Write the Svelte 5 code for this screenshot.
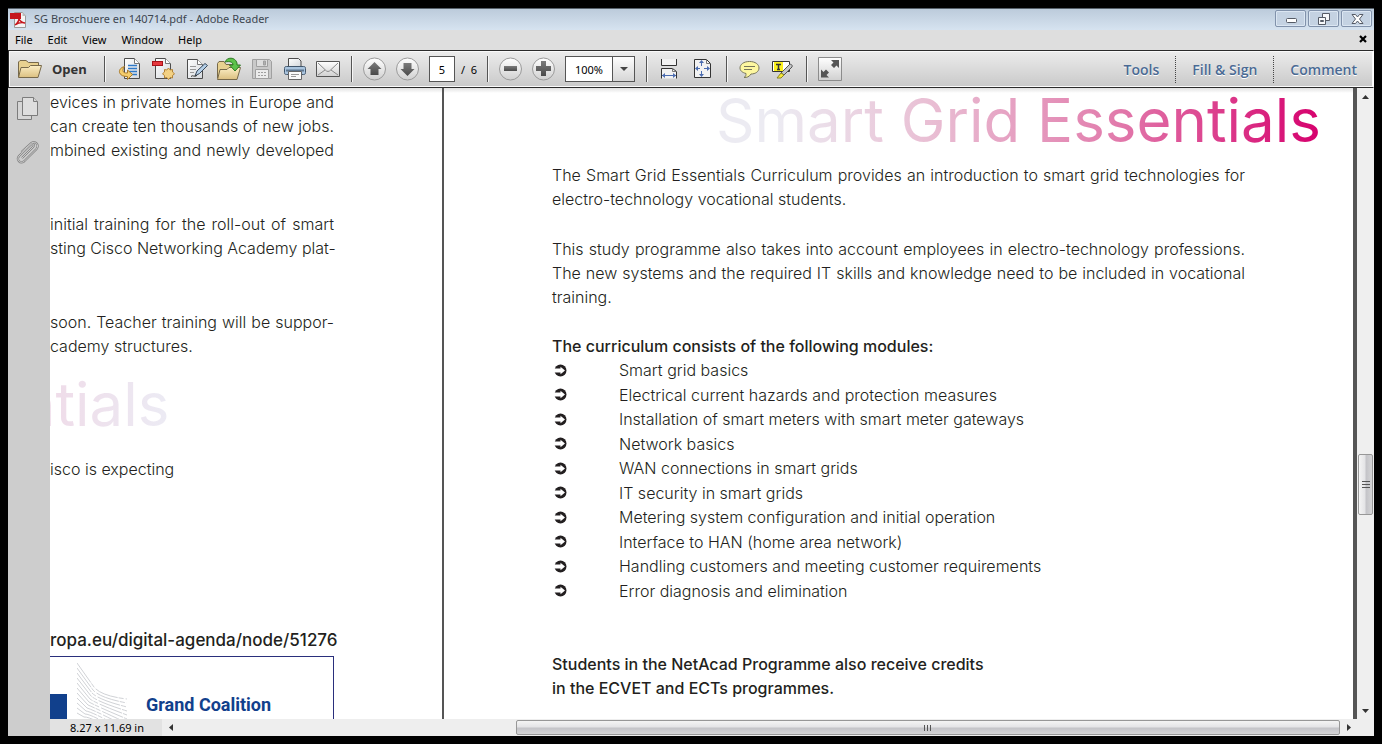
<script>
  const menus = ["File", "Edit", "View", "Window", "Help"];
  const panels = ["Tools", "Fill & Sign", "Comment"];
  const modules = [
    "Smart grid basics",
    "Electrical current hazards and protection measures",
    "Installation of smart meters with smart meter gateways",
    "Network basics",
    "WAN connections in smart grids",
    "IT security in smart grids",
    "Metering system configuration and initial operation",
    "Interface to HAN (home area network)",
    "Handling customers and meeting customer requirements",
    "Error diagnosis and elimination",
  ];
  const waves = [0, 1, 2, 3, 4, 5, 6, 7, 8, 9, 10];

  let page = $state("5");
  let zoom = $state("100%");
</script>

<div class="window">
  <header class="titlebar">
    <svg class="app-icon" width="18" height="18" viewBox="0 0 18 18">
      <path d="M4.500 1.500h8l3 3v12h-11z" fill="#f4f4f4" stroke="#9a9a9a" />
      <path d="M12.500 1v4h4z" fill="#bbb" />
      <rect x="0" y="2" width="11" height="6" fill="#c5161d" />
      <path
        d="M5 14c3-2 5-6 4-9c-1 4 3 7 6 7c-3-1-7 0-10 2z"
        fill="none"
        stroke="#c5161d"
        stroke-width="1.500"
      />
    </svg>
    <span class="title">SG Broschuere en 140714.pdf - Adobe Reader</span>
    <div class="window-buttons">
      <button aria-label="Minimize">
        <svg width="20" height="14" viewBox="0 0 20 14">
          <rect x="5.500" y="6.500" width="10" height="4" rx="1" fill="#fff" stroke="#555b66" />
        </svg>
      </button>
      <button aria-label="Restore">
        <svg width="20" height="14" viewBox="0 0 20 14" fill="#f6f8fa" stroke="#555b66">
          <path d="M8.500 1.500h7v7h-7z" />
          <path d="M4.500 5.500h7v7h-7z" />
          <path d="M6.500 8.500h3v1h-3z" />
        </svg>
      </button>
      <button aria-label="Close">
        <svg width="20" height="14" viewBox="0 0 20 14">
          <path
            d="M5 2.500h3.500l2 2.500l2-2.500H16L12.500 7L16 11.500h-3.500l-2-2.500l-2 2.500H5L8.500 7z"
            fill="#fff"
            stroke="#555b66"
          />
        </svg>
      </button>
    </div>
  </header>

  <nav class="menubar">
    {#each menus as m}
      <button>{m}</button>
    {/each}
    <button class="close-doc" aria-label="Close document">
      <svg width="8" height="8" viewBox="0 0 8 8">
        <path d="M1 1l6 6M7 1l-6 6" stroke="#000" stroke-width="2.200" />
      </svg>
    </button>
  </nav>

  <div class="toolbar">
    <svg class="defs" width="0" height="0" aria-hidden="true">
      <defs>
        <linearGradient id="paper" x1="0" y1="0" x2="1" y2="1">
          <stop offset="0" stop-color="#fff" />
          <stop offset="1" stop-color="#d4d8dc" />
        </linearGradient>
        <linearGradient id="folder" x1="0" y1="0" x2="0" y2="1">
          <stop offset="0" stop-color="#fbeec4" />
          <stop offset="1" stop-color="#dcc081" />
        </linearGradient>
        <linearGradient id="round" x1="0" y1="0" x2="0" y2="1">
          <stop offset="0" stop-color="#fff" />
          <stop offset="1" stop-color="#d0d0d0" />
        </linearGradient>
        <linearGradient id="dark" x1="0" y1="0" x2="0" y2="1">
          <stop offset="0" stop-color="#7c7c7c" />
          <stop offset="1" stop-color="#4a4a4a" />
        </linearGradient>
      </defs>
    </svg>

    <button class="open">
      <svg width="24" height="24" viewBox="0 0 24 24">
        <path d="M.5 20V5L2 3.500h6l2.500 2h10v3" fill="#e8d190" stroke="#77694a" />
        <path d="M.5 20.500L3 10.500h7.500l2-2h11l-3.500 12z" fill="url(#folder)" stroke="#77694a" />
      </svg>
      Open
    </button>

    <div class="group files">
      <button aria-label="Convert file online">
        <svg width="24" height="24" viewBox="0 0 24 24">
          <path d="M6.500 1.500h10l5 5v15h-15z" fill="url(#paper)" stroke="#4c4c4c" />
          <path d="M16.500 1.500v5h5" fill="#fff" stroke="#777" />
          <path d="M10 8.500h9M10 11.500h9M10 14.500h9M13 17.500h6" stroke="#2f79c8" stroke-width="1.500" />
          <path
            d="M6.500 9.500c-3.500 1-5.500 3-5 6c1 3 4 4 8 4v3l5-5l-5-4.500v3c-3 0-4.500-.5-4.500-2.500c0-2 .5-3 1.500-4z"
            fill="#f4cd6c"
            stroke="#a8792a"
          />
        </svg>
      </button>
      <button aria-label="Create PDF">
        <svg width="24" height="24" viewBox="0 0 24 24">
          <path d="M4.500 1.500h10l5 5v15h-15z" fill="url(#paper)" stroke="#4c4c4c" />
          <path d="M14.500 1.500v5h5" fill="#fff" stroke="#777" />
          <rect x="1.500" y="4.500" width="10" height="4" fill="#e5393f" stroke="#a81218" />
          <path
            d="M17.500 11l1.700 2l2.300-.5v2.500l2 1.800l-2 1.700v2.500l-2.300-.5l-1.700 2l-1.700-2l-2.300.5v-2.500l-2-1.700l2-1.800v-2.500l2.300.5z"
            fill="#f3d183"
            stroke="#b28235"
          />
        </svg>
      </button>
      <button aria-label="Sign document">
        <svg width="24" height="24" viewBox="0 0 24 24">
          <path d="M3.500 2.500h10l5 5v14h-15z" fill="url(#paper)" stroke="#4c4c4c" />
          <path d="M13.500 2.500v5h5" fill="#fff" stroke="#777" />
          <path d="M6 9.500h6M6 12.500h6M6 15.500h4" stroke="#999" />
          <path d="M11 19l2-5l8-7.500l2.500 2l-8 8z" fill="#b4cfe8" stroke="#38485a" />
          <path d="M7 19.500c2-2 2.500 1 6-1" fill="none" stroke="#333" />
        </svg>
      </button>
      <button aria-label="Open from cloud">
        <svg width="24" height="24" viewBox="0 0 24 24">
          <path d="M.5 21V6.500L2 4.500h5l2 3h10v4" fill="#e8d190" stroke="#77694a" />
          <path d="M.5 22.500L3 12.500h7l2-2h11.500l-3.500 12z" fill="url(#folder)" stroke="#77694a" />
          <path
            d="M8 5c2-5 10-5.500 12 1v2h3.500l-5.500 6l-5.500-6H16c0-3-3-4-8-3z"
            fill="#5dc24a"
            stroke="#2d7a22"
          />
        </svg>
      </button>
      <button aria-label="Save" disabled>
        <svg width="24" height="24" viewBox="0 0 24 24" fill="#c9c9c9" stroke="#a0a0a0">
          <path d="M2.500 2.500h17l2 2v17h-19z" />
          <path d="M6.500 2.500h11v7h-11z" fill="#dedede" />
          <path d="M13.500 4v4h2v-4z" fill="#b0b0b0" />
          <path d="M5.500 12.500h13v9h-13z" fill="#ececec" />
          <path d="M8 15.500h8M8 18.500h8" stroke-dasharray="2 1" />
        </svg>
      </button>
      <button aria-label="Print">
        <svg width="24" height="24" viewBox="0 0 24 24">
          <path d="M5.500 9.500v-8h10l2.500 2.500v5.500z" fill="url(#paper)" stroke="#4c4c4c" />
          <path
            d="M3.500 9.500h17c1.500 0 2 .5 2 2v4c0 1.500-.5 2-2 2h-17c-1.500 0-2-.5-2-2v-4c0-1.500.5-2 2-2z"
            fill="#a9c4de"
            stroke="#41566c"
          />
          <path d="M3 13.500h18" stroke="#5d7690" stroke-width="2" />
          <path d="M5.500 14.500h13v8h-13z" fill="#fafafa" stroke="#666" />
          <path d="M8 17.500h8M8 19.500h5" stroke="#999" />
        </svg>
      </button>
      <button aria-label="E-mail">
        <svg width="24" height="24" viewBox="0 0 24 24" fill="none" stroke="#8a8a8a">
          <path d="M.5 4.500h23v15H.5z" fill="url(#round)" stroke="#555" />
          <path d="M2 6l8.500 8q1.500 1 3 0L22 6M2 18l7-5M22 18l-7-5" />
        </svg>
      </button>
    </div>

    <div class="group">
      <button aria-label="Previous page">
        <svg width="24" height="24" viewBox="0 0 24 24">
          <circle cx="11.500" cy="12" r="11" fill="url(#round)" stroke="#9a9a9a" />
          <path d="M11.500 5l7 7h-3v6h-8v-6h-3z" fill="url(#dark)" />
        </svg>
      </button>
      <button aria-label="Next page">
        <svg width="24" height="24" viewBox="0 0 24 24">
          <circle cx="11.500" cy="12" r="11" fill="url(#round)" stroke="#9a9a9a" />
          <path d="M11.500 19l7-7h-3V6h-8v6h-3z" fill="url(#dark)" />
        </svg>
      </button>
      <label class="pager">
        <input aria-label="Page" bind:value={page} />
        /&nbsp; 6
      </label>
    </div>

    <div class="group">
      <button aria-label="Zoom out">
        <svg width="24" height="24" viewBox="0 0 24 24">
          <circle cx="11.500" cy="12" r="11" fill="url(#round)" stroke="#9a9a9a" />
          <path d="M5 9h13v5H5z" fill="url(#dark)" />
        </svg>
      </button>
      <button aria-label="Zoom in">
        <svg width="24" height="24" viewBox="0 0 24 24">
          <circle cx="11.500" cy="12" r="11" fill="url(#round)" stroke="#9a9a9a" />
          <path d="M9 4h5v5h5v5h-5v5H9v-5H4V9h5z" fill="url(#dark)" />
        </svg>
      </button>
      <div class="zoom">
        <input aria-label="Zoom" bind:value={zoom} />
        <button aria-label="Zoom levels">
          <svg width="8" height="4" viewBox="0 0 8 4"><path d="M0 0h8l-4 4z" fill="#444" /></svg>
        </button>
      </div>
    </div>

    <div class="group">
      <button aria-label="Fit width">
        <svg width="24" height="24" viewBox="0 0 24 24" fill="none">
          <path d="M3.500 2v6.500h15V2" fill="#f2f2f2" stroke="#333" />
          <path d="M3.500 21.500v-10h11l4 3v7" fill="#f2f2f2" stroke="#333" />
          <path d="M14.500 11.500v3h4" stroke="#777" />
          <path d="M4 18.500h14" stroke="#4b6cb0" />
          <path d="M7 16v5l-3-2.500zM15 16v5l3-2.500z" fill="#4b6cb0" />
        </svg>
      </button>
      <button aria-label="Fit page">
        <svg width="24" height="24" viewBox="0 0 24 24" fill="none">
          <path d="M3.500 2.500h12l4 4v14h-16z" fill="#f2f2f2" stroke="#333" />
          <path d="M15.500 2.500v4h4" stroke="#777" />
          <path d="M10.500 4v5M10.500 14v5M5 11.500h4M13 11.500h5" stroke="#4b6cb0" />
          <path
            d="M10.500 3l2.500 3H8zM10.500 20l2.500-3H8zM4 11.500l3-2.500v5zM19 11.500L16 9v5z"
            fill="#4b6cb0"
          />
        </svg>
      </button>
    </div>

    <div class="group">
      <button aria-label="Add sticky note">
        <svg width="24" height="24" viewBox="0 0 24 24">
          <path
            d="M11.500 4.500c6 0 9.500 3 9.500 6.500s-3.500 6-8 6c-2 3-4 3.500-7 3.500c2-1 2-2.500 2-4c-4-1-6-3-6-5.500c0-3.500 3.500-6.500 9.500-6.500z"
            fill="#fdf7a0"
            stroke="#77765a"
          />
          <path d="M6 9.500h11M6 12.500h8" stroke="#77765a" />
        </svg>
      </button>
      <button aria-label="Highlight text">
        <svg width="24" height="24" viewBox="0 0 24 24">
          <path d="M1.500 4.500h17v10h-17z" fill="#fff" stroke="#333" />
          <path d="M3 5h9v9H3z" fill="#fbf01e" />
          <path d="M5 7.500h5M7.500 7.500v5M6 12.500h3" stroke="#333" stroke-width="1.500" />
          <path d="M10 16l8-8c1-1.500 4-.5 3 2l-8 8z" fill="#c4c6c8" stroke="#555" />
          <path d="M10 16l3 2l-3 3H6z" fill="#f6e93a" stroke="#8a8425" />
        </svg>
      </button>
    </div>

    <div class="group">
      <button aria-label="Read mode">
        <svg width="24" height="24" viewBox="0 0 24 24">
          <path d="M.5.5h23v23H.5z" fill="url(#round)" stroke="#8c8c8c" />
          <path
            d="M13 3h8v8l-2.500-2.500l-2.500 2.500l-3-3l2.500-2.500zM3 20.500v-8l2.500 2.500l2.500-2.500l3 3l-2.500 2.500l2.500 2.500z"
            fill="#555"
          />
        </svg>
      </button>
    </div>

    <div class="panels">
      {#each panels as p}
        <button>{p}</button>
      {/each}
    </div>
  </div>

  <div class="body">
    <aside class="sidebar">
      <button aria-label="Page thumbnails">
        <svg width="24" height="24" viewBox="0 0 24 24" fill="#d6d6d6" stroke="#7c7c7c">
          <path d="M1.500 5.500h14v18h-14z" />
          <path d="M6.500 1.500h11l4 4v14h-15z" fill="#dedede" />
          <path d="M17.500 1.500v4h4" />
        </svg>
      </button>
      <button aria-label="Attachments">
        <svg width="24" height="24" viewBox="0 0 24 24" fill="none">
          <path
            d="M6 18L17 7c2-2 0-4-2-2.500L3 16c-3 4 1 8 5 5.500L20.500 9c3-4-1-8.500-5-6L5.500 12"
            stroke="#858585"
            stroke-width="2.200"
          />
          <path
            d="M6 18L17 7c2-2 0-4-2-2.500L3 16c-3 4 1 8 5 5.500L20.500 9c3-4-1-8.500-5-6L5.500 12"
            stroke="#cdcdcd"
          />
        </svg>
      </button>
    </aside>

    <div class="viewer">
      <div class="pages-row">
        <section class="sheet left">
          <p class="gap">
            evices in private homes in Europe and<br />
            can create ten thousands of new jobs.<br />
            mbined existing and newly developed
          </p>
          <p class="gap">
            initial training for the roll-out of smart<br />
            sting Cisco Networking Academy plat-
          </p>
          <p>soon. Teacher training will be suppor-</p>
          <p class="ragged">cademy structures.</p>
          <h2>ntials</h2>
          <p class="ragged">isco is expecting</p>
          <p class="link">ropa.eu/digital-agenda/node/51276</p>
          <div class="partner">
            <div class="flag"></div>
            <svg class="waves" width="52" height="56" viewBox="0 0 52 56" fill="none" stroke="#d0d2d6">
              {#each waves as w}
                <path
                  d="M0 {w * 5}L{17 - w} {24 + w * 3}Q{24 - w} {33 + w * 2} 50 {36 + w * 4}"
                  stroke-dasharray="24 1 5 2"
                />
              {/each}
            </svg>
            <span>Grand Coalition</span>
          </div>
        </section>

        <section class="sheet right">
          <h1>Smart Grid Essentials</h1>
          <p class="intro">
            The Smart Grid Essentials Curriculum provides an introduction to smart grid technologies for
            electro-technology vocational students.
          </p>
          <p class="about">
            This study programme also takes into account employees in electro-technology professions.
            The new systems and the required IT skills and knowledge need to be included in vocational
            training.
          </p>
          <h3>The curriculum consists of the following modules:</h3>
          <ul>
            {#each modules as m}
              <li>
                <svg width="13" height="13" viewBox="0 0 13 13">
                  <circle cx="6.500" cy="6.500" r="6" fill="#231f20" />
                  <path d="M0 4.500H6.500V2.800L11 6.500L6.500 10.200V8.500H0z" fill="#fff" />
                </svg>
                {m}
              </li>
            {/each}
          </ul>
          <p class="credits">
            Students in the NetAcad Programme also receive credits<br />
            in the ECVET and ECTs programmes.
          </p>
        </section>

        <div class="vscroll">
          <button aria-label="Scroll up">
            <svg width="7" height="4" viewBox="0 0 7 4"><path d="M0 4h7L3.500 0z" fill="#333" /></svg>
          </button>
          <div class="vtrack">
            <div class="vthumb">
              <svg width="8" height="8" viewBox="0 0 8 8">
                <path d="M0 .5h8M0 3.500h8M0 6.500h8" stroke="#555" />
              </svg>
            </div>
          </div>
          <button aria-label="Scroll down">
            <svg width="7" height="4" viewBox="0 0 7 4"><path d="M0 0h7L3.500 4z" fill="#333" /></svg>
          </button>
        </div>
      </div>

      <footer class="hscroll">
        <span class="size">8.27 x 11.69 in</span>
        <button aria-label="Scroll left">
          <svg width="4" height="7" viewBox="0 0 4 7"><path d="M4 0v7L0 3.500z" fill="#333" /></svg>
        </button>
        <div class="htrack">
          <div class="hthumb">
            <svg width="8" height="8" viewBox="0 0 8 8">
              <path d="M.5 1v6M3.500 1v6M6.500 1v6" stroke="#555" />
            </svg>
          </div>
        </div>
        <button aria-label="Scroll right">
          <svg width="4" height="7" viewBox="0 0 4 7"><path d="M0 0v7l4-3.500z" fill="#333" /></svg>
        </button>
        <div class="corner"></div>
      </footer>
    </div>
  </div>
</div>

<style>
  :global(body) {
    margin: 0;
    background: #000;
  }
  .window {
    box-sizing: border-box;
    height: 100vh;
    padding: 8px;
    background: #000;
    display: flex;
    flex-direction: column;
    font-family: "Noto Sans", sans-serif;
    font-size: 11px;
    color: #000;
  }
  button,
  input {
    font: inherit;
    color: inherit;
    margin: 0;
    padding: 0;
    border: 0;
    background: none;
  }
  svg {
    display: block;
    flex: none;
  }
  .defs {
    position: absolute;
  }

  .titlebar {
    height: 21px;
    border-top: 1px solid #56606a;
    display: flex;
    align-items: center;
    background: linear-gradient(#bccbdb, #d6e3f0);
    color: #3d4650;
  }
  .app-icon {
    margin: 0 6px 0 2px;
  }
  .title {
    flex: 1;
    padding-bottom: 2px;
  }
  .window-buttons {
    display: flex;
    gap: 2px;
    padding: 0 2px 2px 0;
  }
  .window-buttons button {
    width: 31px;
    height: 17px;
    display: flex;
    align-items: center;
    justify-content: center;
    border: 1px solid #8192ab;
    border-radius: 2px;
    box-shadow: inset 0 0 0 1px #dbe6f2;
    background: #c4d2e2;
  }

  .menubar {
    box-sizing: border-box;
    height: 20px;
    display: flex;
    align-items: center;
    gap: 15px;
    padding: 0 7px 2px 7px;
    background: #dedede;
  }
  .close-doc {
    margin-left: auto;
  }

  .toolbar {
    box-sizing: border-box;
    height: 38px;
    display: flex;
    align-items: center;
    padding: 0 0 0 9px;
    border: 1px solid #2b2b2b;
    border-right-color: #fff;
    box-shadow: inset 0 0 0 1px #fafafa;
    background: linear-gradient(#ececec, #c9c9c9);
  }
  .open {
    display: flex;
    align-items: center;
    gap: 10px;
    width: 86px;
    font-family: "Open Sans", sans-serif;
    font-size: 13px;
    font-weight: 700;
    color: #333;
  }
  .group {
    height: 26px;
    display: flex;
    align-items: center;
    gap: 9px;
    padding: 0 11px;
    border-left: 1px solid #555;
    box-shadow: inset 1px 0 #f6f6f6;
  }
  .group.files {
    padding-left: 13px;
  }
  .pager {
    display: flex;
    align-items: center;
    gap: 6px;
    width: 47px;
    white-space: nowrap;
  }
  .pager input {
    box-sizing: border-box;
    width: 26px;
    height: 26px;
    border: 1px solid #555;
    background: #fff;
    text-align: center;
  }
  .zoom {
    box-sizing: border-box;
    width: 70px;
    height: 26px;
    display: flex;
    border: 1px solid #555;
    background: #fff;
  }
  .zoom input {
    flex: 1;
    min-width: 0;
    text-align: center;
  }
  .zoom button {
    width: 22px;
    display: flex;
    align-items: center;
    justify-content: center;
    border-left: 1px solid #555;
    background: linear-gradient(#fdfdfd, #d6d6d6);
  }
  .panels {
    margin-left: auto;
    height: 27px;
    display: flex;
    font-family: "Open Sans", sans-serif;
    font-size: 14px;
    font-weight: 600;
    color: #4a6a94;
  }
  .panels button {
    padding: 0 16px;
    text-shadow: 0 1px #fff;
  }
  .panels button + button {
    border-left: 1px dotted #444;
  }

  .body {
    flex: 1;
    min-height: 0;
    display: flex;
  }
  .sidebar {
    width: 42px;
    flex: none;
    display: flex;
    flex-direction: column;
    align-items: center;
    gap: 20px;
    padding-top: 8px;
    box-sizing: border-box;
    padding-right: 3px;
    background: #cdcdcd;
  }
  .viewer {
    flex: 1;
    min-width: 0;
    display: flex;
    flex-direction: column;
  }
  .pages-row {
    flex: 1;
    min-height: 0;
    display: flex;
    background: #fff;
  }
  .sheet {
    box-sizing: border-box;
    display: flex;
    flex-direction: column;
    background: linear-gradient(#e2e2e2, #fff 5px);
    font-family: Inter, sans-serif;
    font-size: 16px;
    font-weight: 300;
    line-height: 24px;
    color: #231f20;
  }
  .sheet p,
  h1,
  h2,
  h3,
  ul {
    margin: 0;
    padding: 0;
  }
  .left {
    width: 394px;
    flex: none;
    overflow: hidden;
    padding: 2px 108px 0 0;
    border-right: 2px solid #555;
    white-space: nowrap;
  }
  .left p {
    text-align-last: justify;
  }
  .left p.gap {
    margin-bottom: 50px;
  }
  .left p.ragged {
    text-align-last: left;
  }
  .left p.link {
    margin-top: auto;
    font-size: 17px;
    font-weight: 500;
  }
  h1,
  h2 {
    font-size: 60px;
    font-weight: 400;
    color: transparent;
    -webkit-background-clip: text;
    background-clip: text;
    white-space: nowrap;
  }
  h1 {
    align-self: flex-end;
    margin-right: 32px;
    line-height: 60px;
    background-image: linear-gradient(90deg, #ecebf2 10%, #e9bfd4 35%, #e27fae 65%, #d6006d);
  }
  /* the heading runs in from the part of the page scrolled out of view */
  .left h2 {
    align-self: flex-start;
    margin: 13px 0 20px -30px;
    line-height: 66px;
    background-image: linear-gradient(90deg, #f0d8e6, #ecebf4);
  }
  .partner {
    height: 62px;
    display: flex;
    align-items: flex-end;
    margin-top: 4px;
    border: 1px solid #2a2f7c;
    border-width: 1px 1px 0 0;
  }
  .flag {
    width: 17px;
    height: 25px;
    background: #11408c;
  }
  .waves {
    margin: 0 17px 0 10px;
  }
  .partner span {
    font-family: Roboto, sans-serif;
    font-size: 18px;
    font-weight: 700;
    line-height: 28px;
    color: #11408c;
  }

  .right {
    flex: 1;
    min-width: 0;
    padding: 2px 0 19px 108px;
    border-right: 4px solid #555;
  }
  .intro,
  .about {
    text-align: justify;
  }
  .right .intro {
    margin: 13px 108px 26px 0;
  }
  .right .about {
    margin: 0 108px 25px 0;
  }
  h3,
  .credits {
    font-size: 16px;
    font-weight: 500;
  }
  ul {
    flex: 1;
    display: flex;
    flex-direction: column;
    justify-content: space-between;
    list-style: none;
  }
  .right .credits {
    margin-top: 49px;
  }
  li {
    display: flex;
    align-items: center;
    gap: 52px;
    padding-left: 2px;
  }

  .vscroll {
    width: 17px;
    flex: none;
    display: flex;
    flex-direction: column;
    background: #efefef;
  }
  .vscroll > button {
    height: 17px;
    display: flex;
    align-items: center;
    justify-content: center;
  }
  .vtrack {
    flex: 1;
    padding: 0 1px;
  }
  .vthumb {
    box-sizing: border-box;
    height: 61px;
    margin-top: 349px;
    display: flex;
    align-items: center;
    justify-content: center;
    border: 1px solid #979797;
    border-radius: 2px;
    background: linear-gradient(90deg, #f4f4f4, #e4e4e6 45%, #c4c4c8 55%, #d4d4d6);
  }
  .hscroll {
    height: 17px;
    display: flex;
    background: #eee;
  }
  .size {
    width: 112px;
    padding-left: 20px;
    box-sizing: border-box;
    line-height: 17px;
    background: #e2e2e2;
  }
  .hscroll > button {
    width: 17px;
    display: flex;
    align-items: center;
    justify-content: center;
  }
  .htrack {
    flex: 1;
    display: flex;
    justify-content: flex-end;
    padding: 1px 0;
  }
  .hthumb {
    width: 71%;
    display: flex;
    align-items: center;
    justify-content: center;
    border: 1px solid #979797;
    border-radius: 2px;
    box-sizing: border-box;
    background: linear-gradient(#f4f4f4, #e4e4e6 45%, #c4c4c8 55%, #d4d4d6);
  }
  .corner {
    width: 17px;
  }
</style>
